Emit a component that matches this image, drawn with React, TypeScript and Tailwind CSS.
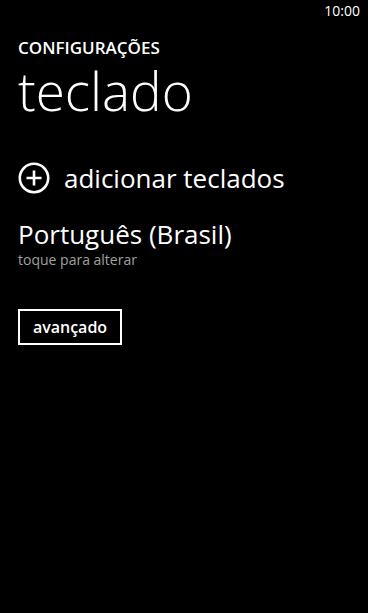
import React from 'react';

const font = { fontFamily: '"Open Sans", "Noto Sans", sans-serif' };

const PlusCircle: React.FC = () => (
  <svg width="32" height="32" viewBox="0 0 32 32" fill="none" stroke="white" strokeWidth="2.6">
    <circle cx="16" cy="16" r="14.2" />
    <path d="M16 8.5v15M8.5 16h15" strokeLinecap="butt" />
  </svg>
);

const App: React.FC = () => {
  return (
    <div className="w-[368px] h-[613px] bg-black text-white overflow-hidden font-['Open_Sans',sans-serif]" style={font}>
      {/* status bar */}
      <div className="h-[22px] flex justify-end pr-[8px] text-[14px] leading-[22px]">10:00</div>

      <div className="pl-[18px] flex flex-col">
        <div className="mt-[16px] text-[17px] leading-[20px] font-semibold">CONFIGURAÇÕES</div>
        <div className="mt-[5px] text-[53px] leading-[56px] font-light">teclado</div>

        <button className="mt-[39px] h-[40px] flex items-center gap-[14px] text-left">
          <PlusCircle />
          <span className="text-[26px] leading-[36px] -mt-[1px]">adicionar teclados</span>
        </button>

        <div className="mt-[19px] text-[26px] leading-[34px]">Português (Brasil)</div>
        <div className="text-[14px] leading-[18px] text-[#a0a0a0]">toque para alterar</div>

        <div className="mt-[40px]">
          <button className="h-[36px] w-[104px] border-2 border-white text-[16px] font-semibold leading-[32px]">
            avançado
          </button>
        </div>
      </div>
    </div>
  );
};

export default App;
